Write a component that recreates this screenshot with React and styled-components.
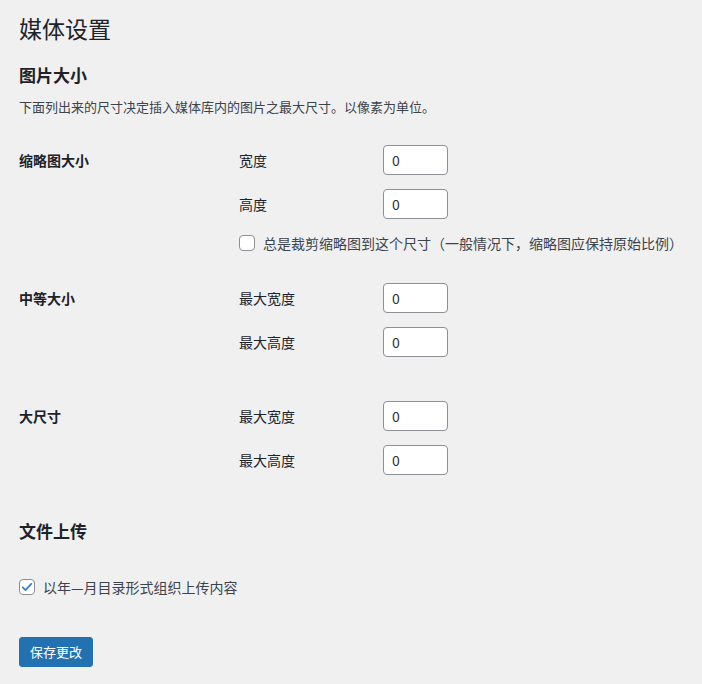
import React from 'react'
import styled, { createGlobalStyle } from 'styled-components'

const GlobalStyle = createGlobalStyle`
    body {
        margin: 0;
        background: #f0f0f1;
        color: #3c434a;
        font-family: "Noto Sans CJK SC", "Noto Sans", sans-serif;
        font-size: 14px;
    }
`;

const thumbFields = [
    { label: '宽度', value: '0' },
    { label: '高度', value: '0' }
];

const maxFields = [
    { label: '最大宽度', value: '0' },
    { label: '最大高度', value: '0' }
];

function Check({ checked }) {
    return (
        <CheckBox checked={checked}>
            {checked && (
                <svg width="14" height="14" viewBox="0 0 20 20">
                    <path d="M4 10.5l4 4 8-9" fill="none" stroke="#3582c4" strokeWidth="2.6" strokeLinecap="round" strokeLinejoin="round" />
                </svg>
            )}
        </CheckBox>
    )
}

function SizeRow({ title, fields, gap, children }) {
    return (
        <Row gap={gap}>
            <RowLabel>{title}</RowLabel>
            <Fields>
                {fields.map((f) => (
                    <Field key={f.label}>
                        <FieldLabel>{f.label}</FieldLabel>
                        <Input>{f.value}</Input>
                    </Field>
                ))}
                {children}
            </Fields>
        </Row>
    )
}

function App() {
    return (
        <Page>
            <GlobalStyle />
            <Title>媒体设置</Title>
            <Heading top={20}>图片大小</Heading>
            <Desc>下面列出来的尺寸决定插入媒体库内的图片之最大尺寸。以像素为单位。</Desc>

            <SizeRow title="缩略图大小" fields={thumbFields} gap={28}>
                <CheckRow>
                    <Check />
                    <span>总是裁剪缩略图到这个尺寸（一般情况下，缩略图应保持原始比例）</span>
                </CheckRow>
            </SizeRow>
            <SizeRow title="中等大小" fields={maxFields} gap={30} />
            <SizeRow title="大尺寸" fields={maxFields} gap={44} />

            <Heading top={44}>文件上传</Heading>
            <CheckRow top={34}>
                <Check checked />
                <span>以年—月目录形式组织上传内容</span>
            </CheckRow>
            <Button>保存更改</Button>
        </Page>
    )
}

const Page = styled.div`
    padding: 13px 19px 20px;
`;

const Title = styled.h1`
    margin: 0;
    font-size: 23px;
    font-weight: 400;
    line-height: 30px;
    color: #1d2327;
`;

const Heading = styled.h2`
    margin: ${props => props.top}px 0 0;
    font-size: 17px;
    font-weight: 700;
    line-height: 24px;
    color: #1d2327;
`;

const Desc = styled.p`
    margin: 10px 0 0;
    font-size: 13px;
    line-height: 20px;
`;

const Row = styled.div`
    display: grid;
    grid-template-columns: 220px 1fr;
    margin-top: ${props => props.gap}px;
`;

const RowLabel = styled.div`
    font-size: 14px;
    font-weight: 700;
    line-height: 30px;
    color: #1d2327;
`;

const Fields = styled.div`
    display: flex;
    flex-direction: column;
    gap: 14px;
`;

const Field = styled.div`
    display: flex;
    align-items: center;
`;

const FieldLabel = styled.span`
    width: 144px;
    line-height: 30px;
    color: #1d2327;
`;

const Input = styled.div`
    box-sizing: border-box;
    width: 65px;
    height: 30px;
    padding: 0 8px;
    background: #fff;
    border: 1px solid #8c8f94;
    border-radius: 4px;
    font-size: 14px;
    line-height: 28px;
    color: #2c3338;
`;

const CheckRow = styled.label`
    display: flex;
    align-items: center;
    gap: 8px;
    margin-top: ${props => props.top || 0}px;
    font-size: 14px;
    line-height: 20px;
    color: #3c434a;
`;

const CheckBox = styled.span`
    box-sizing: border-box;
    width: 16px;
    height: 16px;
    flex: none;
    display: flex;
    align-items: center;
    justify-content: center;
    background: #fff;
    border: 1px solid #8c8f94;
    border-radius: 4px;
`;

const Button = styled.button`
    display: block;
    margin-top: 40px;
    height: 30px;
    padding: 0 10px;
    background: #2271b1;
    border: 1px solid #2271b1;
    border-radius: 3px;
    color: #fff;
    font-family: inherit;
    font-size: 13px;
    line-height: 28px;
`;

export default App
